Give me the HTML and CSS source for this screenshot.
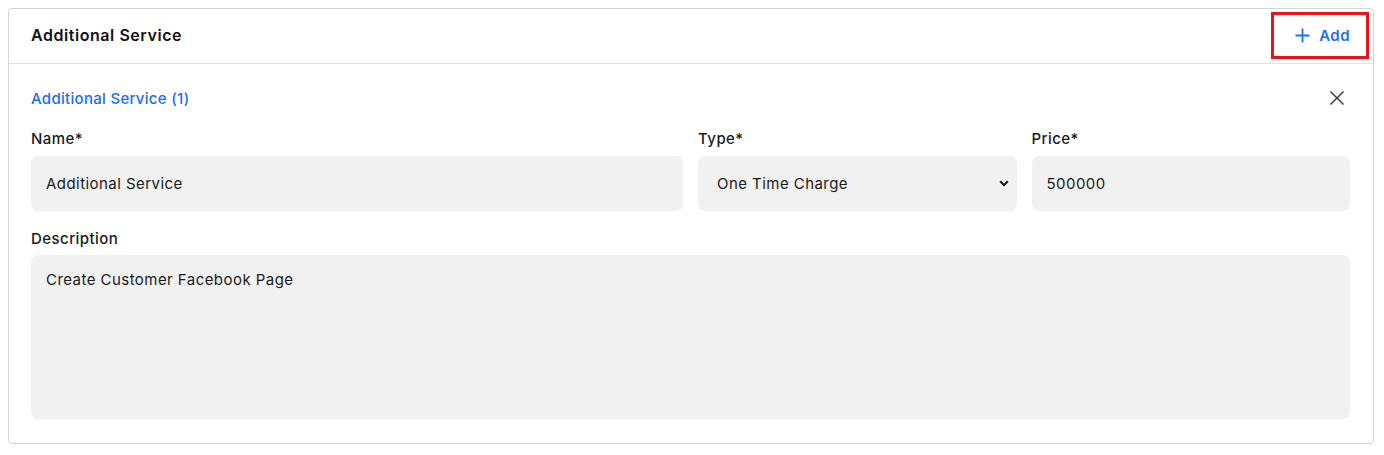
FILE: index.html
```html
<!DOCTYPE html>
<html>
<head>
<meta charset="utf-8">
<link rel="stylesheet" href="styles.css">
</head>
<body>
<section class="card">
  <header class="card-header">
    <h2 class="card-title">Additional Service</h2>
    <button class="add-btn" type="button">
      <svg class="plus" width="15" height="15" viewBox="0 0 15 15"><path d="M7.5 0.5v14M0.5 7.5h14" stroke="currentColor" stroke-width="1.8" fill="none"/></svg>
      <span>Add</span>
    </button>
  </header>
  <div class="card-body">
    <div class="item-head">
      <span class="item-title">Additional Service (1)</span>
      <svg class="close" width="16" height="16" viewBox="0 0 16 16"><path d="M1.5 1.5l13 13M14.5 1.5l-13 13" stroke="#333" stroke-width="1.4" fill="none"/></svg>
    </div>
    <div class="row3">
      <div class="field">
        <label class="label">Name*</label>
        <div class="control">Additional Service</div>
      </div>
      <div class="field">
        <label class="label">Type*</label>
        <div class="control select">
          <span>One Time Charge</span>
          <svg class="chev" width="10" height="7" viewBox="0 0 10 7"><path d="M1.2 1.3l3.8 3.8 3.8-3.8" stroke="#111" stroke-width="2" fill="none"/></svg>
        </div>
      </div>
      <div class="field">
        <label class="label">Price*</label>
        <div class="control">500000</div>
      </div>
    </div>
    <div class="field desc">
      <label class="label">Description</label>
      <div class="control textarea">Create Customer Facebook Page</div>
    </div>
  </div>
</section>
</body>
</html>
```
FILE: styles.css
```css
* { box-sizing: border-box; }
body {
  margin: 8px;
  background: #fff;
  font-family: "Inter", "Open Sans", sans-serif;
  color: #1a1a1a;
  letter-spacing: 0.45px;
}
.card {
  width: 1366px;
  height: 436px;
  border: 1px solid #d4d4d4;
  border-radius: 4px;
  background: #fff;
}
.card-header {
  height: 55px;
  border-bottom: 1px solid #e2e2e2;
  display: flex;
  align-items: center;
  justify-content: space-between;
  padding: 0 4px 2px 22px;
}
.card-title {
  margin: 0;
  font-size: 16px;
  font-weight: 600;
  color: #111;
  letter-spacing: 0.55px;
}
.add-btn {
  width: 98px;
  height: 47px;
  border: 3px solid #e8141c;
  background: #fff;
  color: #1a6ef5;
  font-family: inherit;
  letter-spacing: inherit;
  font-size: 15px;
  font-weight: 600;
  display: flex;
  align-items: center;
  justify-content: flex-end;
  gap: 9px;
  padding: 0 16px 0 0;
  align-self: flex-start;
  margin-top: 3px;
}
.plus { display: block; }
.card-body {
  padding: 25px 23px 23px 22px;
}
.item-head {
  display: flex;
  justify-content: space-between;
  align-items: center;
  height: 18px;
  padding-right: 5px;
}
.item-title {
  color: #1a6ef5;
  font-size: 15px;
  font-weight: 500;
  letter-spacing: 0.3px;
}
.row3 {
  display: grid;
  grid-template-columns: calc(50% - 7.5px) 1fr 1fr;
  column-gap: 15px;
  margin-top: 23px;
}
.field { display: flex; flex-direction: column; }
.label {
  font-size: 15px;
  font-weight: 500;
  color: #1a1a1a;
  height: 18px;
  line-height: 18px;
  margin-bottom: 8px;
}
.control {
  height: 55px;
  background: #f1f1f1;
  border-radius: 7px;
  padding: 0 15px;
  display: flex;
  align-items: center;
  font-size: 15px;
  color: #1a1a1a;
}
.select {
  padding: 0 8px 0 19px;
  justify-content: space-between;
}
.desc { margin-top: 19px; }
.desc .label { margin-bottom: 7px; }
.textarea {
  height: 164px;
  align-items: flex-start;
  padding-top: 15px;
}
```
